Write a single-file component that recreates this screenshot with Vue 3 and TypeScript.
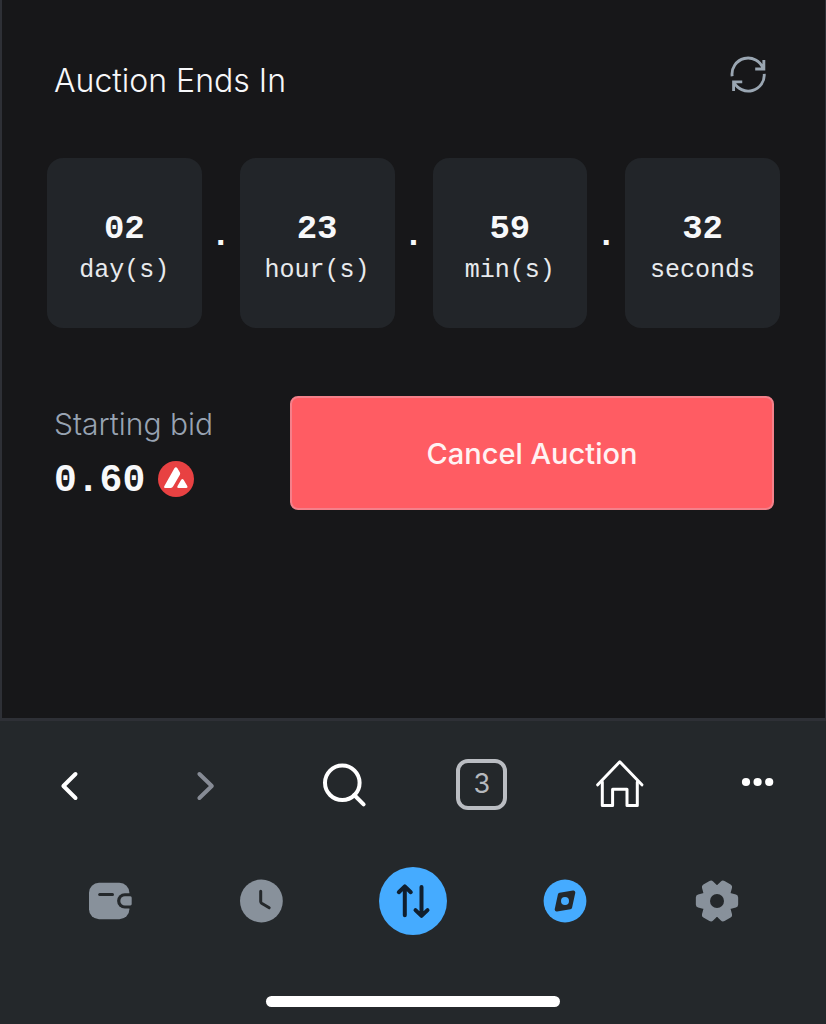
<script setup lang="ts">
interface Unit {
  value: string
  label: string
}

const units: Unit[] = [
  { value: '02', label: 'day(s)' },
  { value: '23', label: 'hour(s)' },
  { value: '59', label: 'min(s)' },
  { value: '32', label: 'seconds' },
]

// Six-toothed gear outline, centred on 24,24.
const gearPoints: string = Array.from({ length: 6 }, (_, tooth) =>
  [
    [-22, 13.4],
    [-11, 18.5],
    [11, 18.5],
    [22, 13.4],
    [30, 12.8],
  ]
    .map(([offset, radius]) => {
      const angle = ((tooth * 60 + offset) * Math.PI) / 180
      return `${(24 + radius * Math.cos(angle)).toFixed(2)},${(24 + radius * Math.sin(angle)).toFixed(2)}`
    })
    .join(' '),
).join(' ')
</script>

<template>
  <div class="screen">
    <main class="auction">
      <header class="heading">
        <h1>Auction Ends In</h1>
        <button class="bare" type="button" aria-label="Refresh">
          <svg class="line refresh" width="48" height="48" viewBox="-1 -1 50 50">
            <path d="M7.5 25.3A16.7 16.7 0 0 1 39.8 17.5M40.5 8.3V17.7H31.5" />
            <path d="M40.9 22.8A16.7 16.7 0 0 1 9.3 31.5M9 40.6V31.2H18" />
          </svg>
        </button>
      </header>

      <section class="countdown" aria-label="Time left">
        <template v-for="(unit, index) in units" :key="unit.label">
          <span v-if="index > 0" class="separator">.</span>
          <div class="unit">
            <strong>{{ unit.value }}</strong>
            <span>{{ unit.label }}</span>
          </div>
        </template>
      </section>

      <section class="bid">
        <div>
          <p class="bid-label">Starting bid</p>
          <p class="price">
            <span>0.60</span>
            <svg width="36" height="36" viewBox="0 0 36 36" role="img" aria-label="AVAX">
              <circle cx="18" cy="18" r="18" fill="#e84142" />
              <path
                d="M16.4 7.3Q17.9 5.3 19.4 7.3L21.9 11.6Q22.5 12.7 21.9 13.8L15.2 25.3Q14.3 26.9 12.8 27H7.6Q5.4 26.8 6.4 24.9ZM23.2 18.8Q24.4 17.2 25.6 18.8L29.4 25.2Q30 26.8 28.3 27H20.4Q18.6 26.8 19.4 25.2Z"
                fill="#fff"
              />
            </svg>
          </p>
        </div>
        <button class="cancel" type="button">Cancel Auction</button>
      </section>
    </main>

    <footer class="chrome">
      <nav class="browser-bar" aria-label="Browser">
        <button class="bare" type="button" aria-label="Back">
          <svg class="line back" width="48" height="48" viewBox="0 0 48 48">
            <path d="M30.5 14L18.4 26L30.5 38" />
          </svg>
        </button>
        <button class="bare" type="button" aria-label="Forward">
          <svg class="line forward" width="48" height="48" viewBox="0 0 48 48">
            <path d="M17.4 14L29.8 26L17.4 38" />
          </svg>
        </button>
        <button class="bare" type="button" aria-label="Search">
          <svg class="line search" width="48" height="48" viewBox="0 0 48 48">
            <circle cx="22.3" cy="22.8" r="17.3" />
            <path d="M34.2 35L43.6 44.4" />
          </svg>
        </button>
        <button class="tabs" type="button" aria-label="3 open tabs">3</button>
        <button class="bare" type="button" aria-label="Home">
          <svg class="line home" width="52" height="52" viewBox="0 0 52 52">
            <path d="M4.7 26.8L26.8 3.8L48.9 26.8" />
            <path d="M9.3 24V47.5H19.6V31.3H34V47.5H44.3V24" />
          </svg>
        </button>
        <button class="bare" type="button" aria-label="More">
          <svg width="48" height="48" viewBox="0 0 48 48" fill="#fff">
            <circle cx="13" cy="22" r="4.1" />
            <circle cx="24.6" cy="22" r="4.1" />
            <circle cx="36.2" cy="22" r="4.1" />
          </svg>
        </button>
      </nav>

      <nav class="app-bar" aria-label="Wallet">
        <button class="bare" type="button" aria-label="Wallet">
          <svg width="48" height="48" viewBox="0 0 48 48">
            <rect x="3" y="5.7" width="40.4" height="36.5" rx="10" fill="#88919b" />
            <path d="M46 16.2H38.8A7.7 7.7 0 0 0 38.8 31.6H46Z" fill="#24282b" />
            <path d="M44.4 19.2H39A4.7 4.7 0 0 0 39 28.6H44.4Q45.7 28.4 45.7 27V20.7Q45.7 19.3 44.4 19.2Z" fill="#88919b" />
            <path d="M13.7 17.4H26.5" class="line ink" />
          </svg>
        </button>
        <button class="bare" type="button" aria-label="Activity">
          <svg width="48" height="48" viewBox="0 0 48 48">
            <circle cx="24.4" cy="24" r="21.4" fill="#88919b" />
            <path d="M23.7 14.3V24.6Q23.7 25.6 24.6 26.2L32.2 30.8" class="line ink" />
          </svg>
        </button>
        <button class="bare" type="button" aria-label="Swap">
          <svg width="68" height="68" viewBox="0 0 68 68">
            <circle cx="34" cy="34" r="34" fill="#45abff" />
            <path d="M25.8 48.2V19.8M19.8 25.2L25.8 19.4L31.8 25.2M42.5 20V48.6M36.5 43.1L42.5 48.9L48.5 43.1" class="line swap" />
          </svg>
        </button>
        <button class="bare" type="button" aria-label="Browser" aria-current="page">
          <svg width="48" height="48" viewBox="0 0 48 48">
            <circle cx="24" cy="24" r="21.4" fill="#45abff" />
            <path d="M18.9 17.8L32.3 15.5L29.1 30.2L15.7 32.5Z" class="needle" />
            <circle cx="24" cy="24" r="4" fill="#45abff" />
          </svg>
        </button>
        <button class="bare" type="button" aria-label="Settings">
          <svg width="48" height="48" viewBox="-1 0 48 48">
            <polygon :points="gearPoints" class="gear" />
            <circle cx="24" cy="24" r="7" fill="#24282b" />
          </svg>
        </button>
      </nav>

      <div class="home-indicator"></div>
    </footer>
  </div>
</template>

<style>
body {
  margin: 0;
  background: #171719;
}
</style>

<style scoped>
* {
  box-sizing: border-box;
}

.screen {
  display: flex;
  flex-direction: column;
  min-height: 100vh;
  background: #171719;
  color: #f7f8fa;
  font-family: Inter, "Liberation Sans", sans-serif;
}

button {
  font: inherit;
  color: inherit;
  cursor: pointer;
}

svg {
  display: block;
}

.bare {
  display: flex;
  padding: 0;
  border: 0;
  background: none;
}

.line {
  fill: none;
  stroke: #fff;
  stroke-width: 4;
  stroke-linecap: round;
  stroke-linejoin: round;
}

.auction {
  flex: 1;
  padding: 51px 45px 48px;
  border: solid #2e3036;
  border-width: 0 1px 3px 2px;
}

.heading {
  display: flex;
  justify-content: space-between;
  align-items: flex-start;
  padding: 0 8px 0 7px;
}

h1 {
  margin: 0;
  font-size: 32px;
  font-weight: 300;
  line-height: 60px;
}

.refresh {
  stroke: #9aa6b2;
  stroke-width: 3;
  stroke-linecap: butt;
  stroke-linejoin: miter;
}

.countdown {
  display: grid;
  grid-template-columns: 1fr 38px 1fr 38px 1fr 38px 1fr;
  margin-top: 47px;
  font-family: "Liberation Mono", monospace;
}

.unit {
  display: flex;
  flex-direction: column;
  align-items: center;
  padding: 49px 0 37px;
  border-radius: 16px;
  background: #222529;
}

.unit strong {
  font-size: 34px;
  line-height: 44px;
}

.unit span {
  color: #e8eaed;
  font-size: 25px;
  line-height: 40px;
}

.separator {
  align-self: center;
  padding-bottom: 14px;
  font-size: 34px;
  font-weight: 700;
  line-height: 44px;
  text-align: center;
}

.bid {
  display: grid;
  grid-template-columns: 236px 1fr;
  margin-top: 68px;
  padding: 0 6px 0 7px;
}

p {
  margin: 0;
}

.bid-label {
  color: #98a3b2;
  font-size: 30px;
  font-weight: 300;
  line-height: 56px;
}

.price {
  display: flex;
  align-items: center;
  gap: 13px;
  font-family: "Liberation Mono", monospace;
  font-size: 38px;
  font-weight: 700;
  line-height: 50px;
}

.price span {
  padding-top: 4px;
}

.cancel {
  height: 114px;
  border: 2px solid #f4808a;
  border-radius: 8px;
  background: #ff5c63;
  color: #fff2f3;
  font-size: 29px;
  font-weight: 500;
}

.chrome {
  display: flow-root;
  background: #24282b;
}

.browser-bar {
  display: grid;
  grid-template-columns: repeat(6, 1fr);
  place-items: center;
  height: 126px;
}

.forward {
  stroke: #868b95;
}

.home {
  stroke-width: 3;
}

.tabs {
  width: 51px;
  height: 51px;
  padding: 0;
  border: 4px solid #babdc2;
  border-radius: 12px;
  background: none;
  color: #b6b9be;
  font-size: 27px;
  line-height: 40px;
}

.app-bar {
  display: grid;
  grid-template-columns: repeat(5, 1fr);
  place-items: center;
  height: 108px;
  padding: 0 34px;
}

.ink {
  stroke: #24282b;
  stroke-width: 3;
}

.swap {
  stroke: #101f2e;
}

.needle {
  fill: #24282b;
  stroke: #24282b;
  stroke-width: 4;
  stroke-linejoin: round;
}

.gear {
  fill: #88919b;
  stroke: #88919b;
  stroke-width: 6;
  stroke-linejoin: round;
}

.home-indicator {
  width: 294px;
  height: 11px;
  margin: 41px auto 17px;
  border-radius: 6px;
  background: #fff;
}
</style>
